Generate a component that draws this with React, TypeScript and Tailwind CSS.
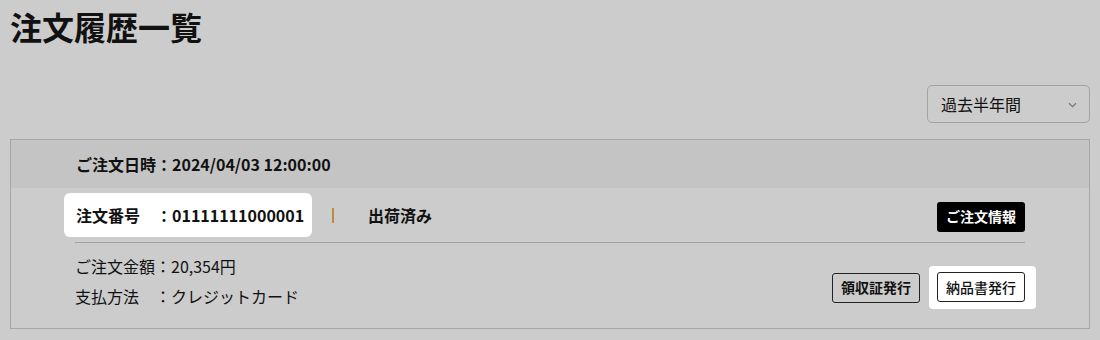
import React from "react";

export default function App() {
  return (
    <div
      className="w-[1100px] h-[340px] overflow-hidden bg-[#cccccc] text-[#111111]"
      style={{ fontFamily: '"Noto Sans CJK JP", "Noto Sans", sans-serif' }}
    >
      <h1 className="px-[10px] pt-[4px] text-[32px] leading-[44px] font-bold">注文履歴一覧</h1>

      <div className="mt-[37px] flex justify-end pr-[10px]">
        <div className="flex h-[38px] w-[163px] items-center justify-between rounded-[5px] border border-[#a3a3a3] pl-[13px] pr-[12px] text-[16px]">
          <span>過去半年間</span>
          <svg width="9" height="6" viewBox="0 0 9 6" className="mt-[2px]">
            <path d="M1 1.2 L4.5 4.6 L8 1.2" fill="none" stroke="#777777" strokeWidth="1.2" />
          </svg>
        </div>
      </div>

      <div className="mx-[10px] mt-[16px] h-[190px] border border-[#a6a6a6]">
        <div className="flex h-[48px] items-center bg-[#c4c4c4] pl-[65px] text-[16px] font-bold">
          ご注文日時：2024/04/03 12:00:00
        </div>

        <div className="px-[64px]">
          <div className="flex h-[55px] items-center border-b border-[#a3a3a3]">
            <div className="-ml-[11px] flex h-[44px] w-[248px] items-center rounded-[6px] bg-white pl-[12px] text-[16px] font-bold">
              注文番号　：01111111000001
            </div>
            <div className="ml-[20px] h-[15px] w-[2px] bg-[#c08a3e]" />
            <div className="ml-[34px] text-[16px] font-bold">出荷済み</div>
            <div className="ml-auto mt-[3px] flex h-[30px] w-[88px] items-center justify-center rounded-[3px] bg-black text-[14px] font-bold text-white">
              ご注文情報
            </div>
          </div>

          <div className="flex items-start pt-[8px]">
            <div className="flex flex-col text-[16px] leading-[30px]">
              <div>ご注文金額：20,354円</div>
              <div>支払方法　：クレジットカード</div>
            </div>
            <div className="ml-auto mt-[15px] flex items-center">
              <div className="flex h-[30px] w-[88px] items-center justify-center rounded-[3px] border border-[#222222] text-[14px] font-bold">
                領収証発行
              </div>
              <div className="-mr-[11px] ml-[9px] rounded-[4px] bg-white pb-[7px] pl-[8px] pr-[11px] pt-[6px]">
                <div className="flex h-[30px] w-[88px] items-center justify-center rounded-[3px] border border-[#222222] bg-white text-[14px] font-medium">
                  納品書発行
                </div>
              </div>
            </div>
          </div>
        </div>
      </div>
    </div>
  );
}
